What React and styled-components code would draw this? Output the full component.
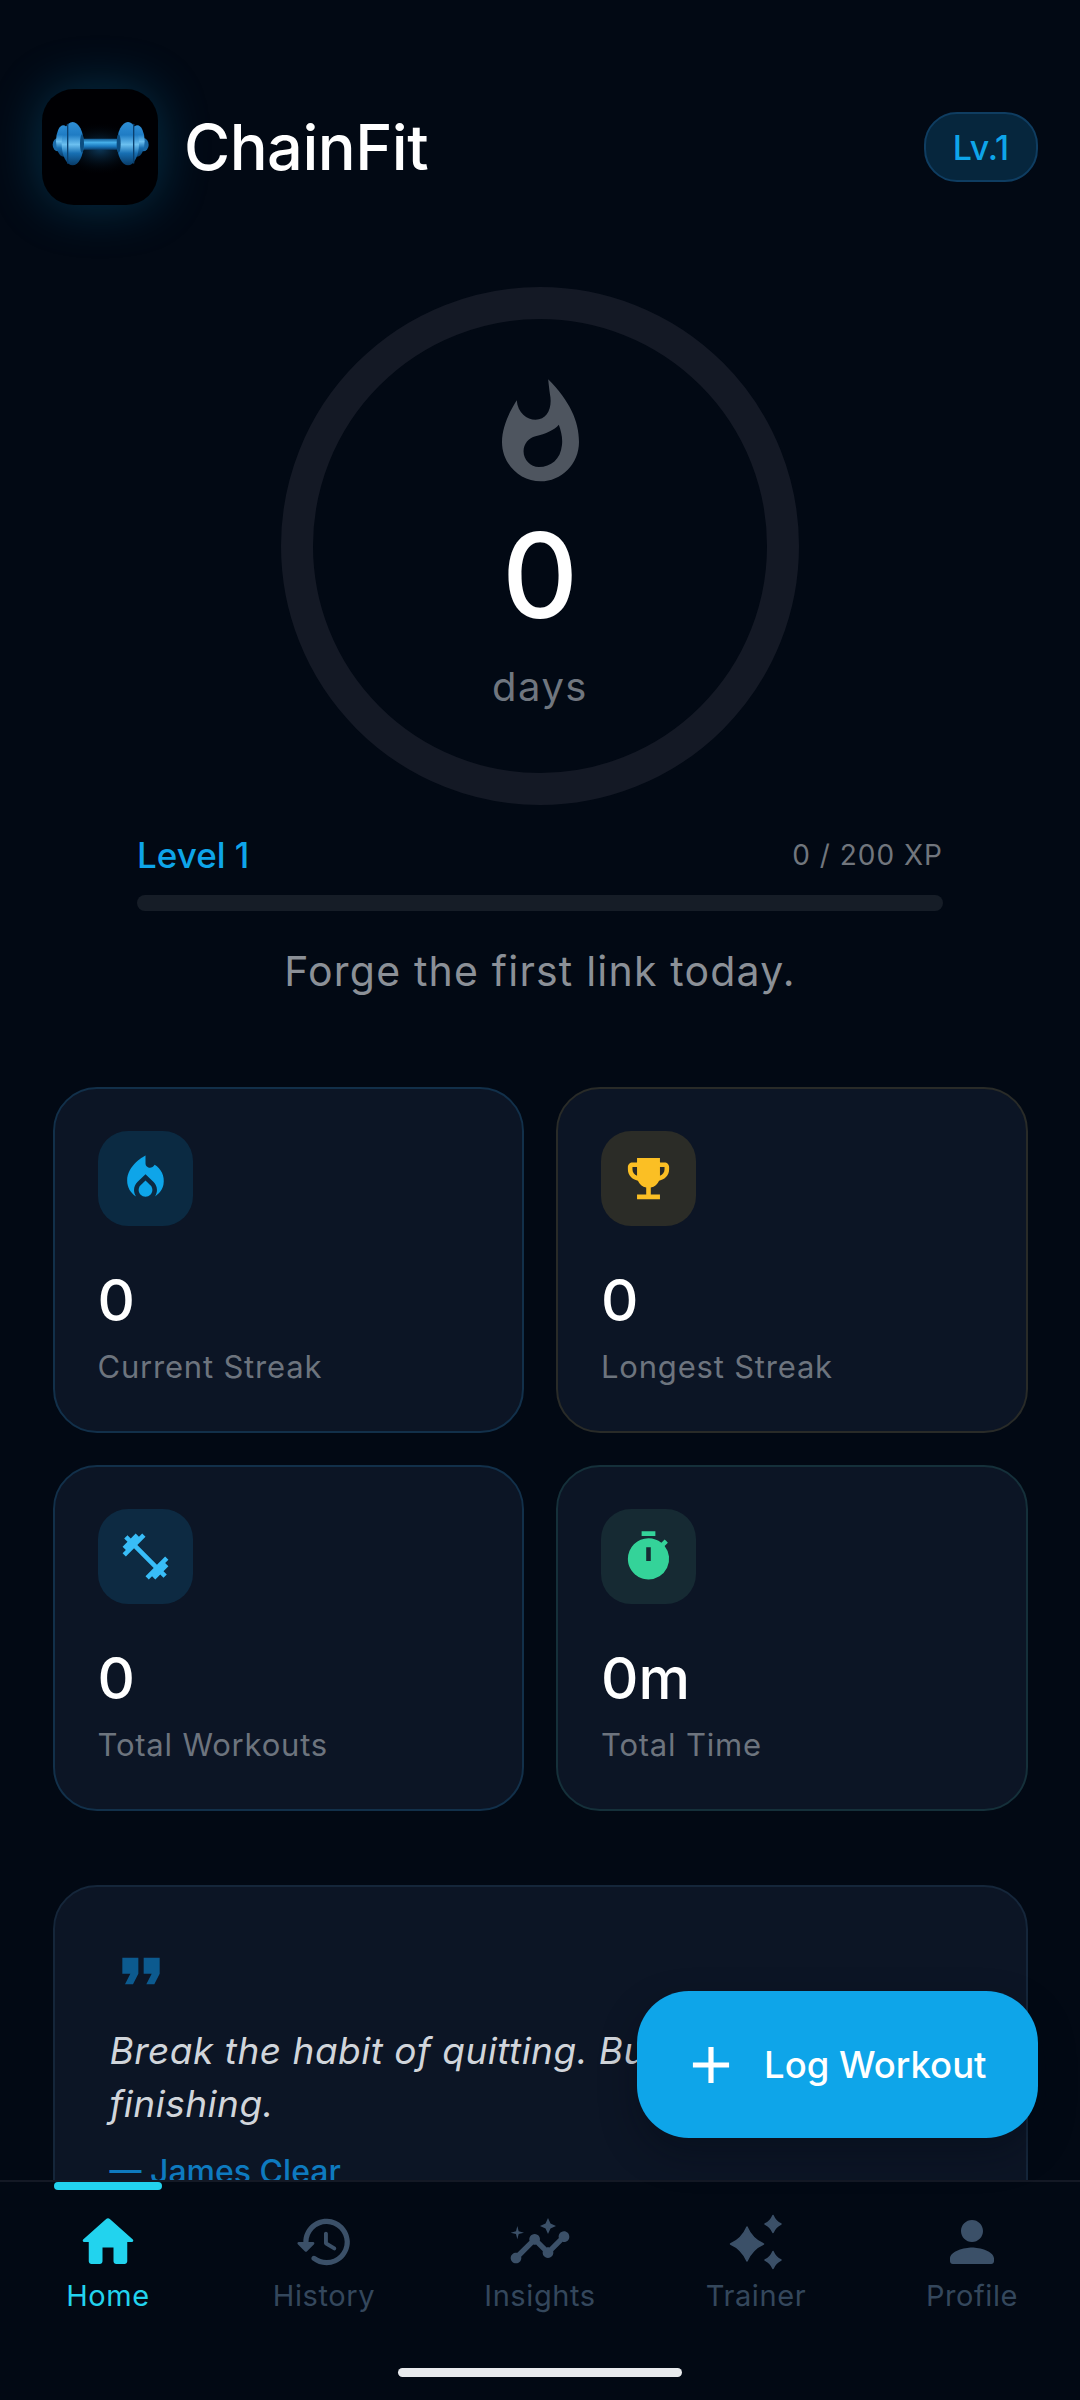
import React from "react";
import styled, { createGlobalStyle } from "styled-components";
import {
  MdLocalFireDepartment,
  MdEmojiEvents,
  MdFitnessCenter,
  MdTimer,
  MdFormatQuote,
  MdAdd,
  MdInsights,
} from "react-icons/md";

const GlobalStyle = createGlobalStyle`
  html, body {
    margin: 0;
    padding: 0;
    background: #020914;
  }
  * {
    box-sizing: border-box;
  }
`;

const star = (cx, cy, rx, ry) => {
  const a = rx * 0.3;
  const b = ry * 0.3;
  return `M${cx} ${cy - ry}Q${cx + a} ${cy - b} ${cx + rx} ${cy}Q${cx + a} ${cy + b} ${cx} ${cy + ry}Q${cx - a} ${cy + b} ${cx - rx} ${cy}Q${cx - a} ${cy - b} ${cx} ${cy - ry}Z`;
};

function DumbbellLogo() {
  return (
    <LogoSvg viewBox="66 56 344 348">
      <defs>
        <radialGradient id="logoGlow" cx="50%" cy="50%" r="50%">
          <stop offset="0%" stopColor="#0d3a5c" />
          <stop offset="100%" stopColor="#000003" stopOpacity="0" />
        </radialGradient>
        <linearGradient id="plate" x1="0" y1="0" x2="0" y2="1">
          <stop offset="0%" stopColor="#2f8fd6" />
          <stop offset="30%" stopColor="#1f7cc4" />
          <stop offset="52%" stopColor="#6cc0f0" />
          <stop offset="72%" stopColor="#176fb3" />
          <stop offset="100%" stopColor="#083a66" />
        </linearGradient>
        <linearGradient id="bar" x1="0" y1="0" x2="0" y2="1">
          <stop offset="0%" stopColor="#0f5a94" />
          <stop offset="35%" stopColor="#45aee8" />
          <stop offset="70%" stopColor="#1a78bd" />
          <stop offset="100%" stopColor="#0a3f6e" />
        </linearGradient>
      </defs>
      <ellipse cx="238" cy="235" rx="120" ry="80" fill="url(#logoGlow)" />
      <rect x="180" y="205" width="118" height="33" rx="5" fill="url(#bar)" />
      <ellipse cx="112" cy="223" rx="16" ry="20" fill="#1a6aa8" />
      <ellipse cx="128" cy="212" rx="22" ry="47" fill="url(#plate)" />
      <ellipse cx="156" cy="220" rx="33" ry="65" fill="url(#plate)" />
      <rect x="139" y="160" width="4" height="120" rx="2" fill="#0a3f6e" />
      <ellipse cx="184" cy="220" rx="6" ry="28" fill="#0c4d80" />
      <ellipse cx="368" cy="223" rx="16" ry="20" fill="#1a6aa8" />
      <ellipse cx="350" cy="212" rx="22" ry="47" fill="url(#plate)" />
      <ellipse cx="322" cy="220" rx="33" ry="65" fill="url(#plate)" />
      <rect x="337" y="160" width="4" height="120" rx="2" fill="#0a3f6e" />
      <ellipse cx="294" cy="220" rx="6" ry="28" fill="#0c4d80" />
    </LogoSvg>
  );
}

function EmptyFlame() {
  return (
    <FlameSvg viewBox="672 285 225 300">
      <path
        fillRule="evenodd"
        d="M807 287C870 350 897 410 897 470C897 535 845 585 785 585C725 585 672 535 672 470C672 425 695 380 715 348C718 385 745 405 770 405C805 405 820 370 812 330C810 315 808 300 807 287ZM838 420C825 435 800 447 770 453C750 458 735 475 735 497C735 522 755 543 780 543C815 543 843 520 847 480C850 460 845 440 838 420Z"
      />
    </FlameSvg>
  );
}

function HomeIcon() {
  return (
    <svg viewBox="0 0 24 24" width="66" height="66" fill="currentColor">
      <path d="M10 19v-5h4v5c0 .55.45 1 1 1h3c.55 0 1-.45 1-1v-7h1.7c.46 0 .68-.57.33-.87L12.67 3.6c-.38-.34-.96-.34-1.34 0l-8.36 7.53c-.34.3-.13.87.33.87H5v7c0 .55.45 1 1 1h3c.55 0 1-.45 1-1z" />
    </svg>
  );
}

function HistoryIcon() {
  return (
    <svg viewBox="0 0 24 24" width="62" height="62" fill="currentColor">
      <path d="M13.26 3C8.17 2.86 4 6.95 4 12H2.21c-.45 0-.67.54-.35.85l2.79 2.8c.2.2.51.2.71 0l2.79-2.8c.31-.31.09-.85-.36-.85H6c0-3.9 3.18-7.05 7.1-7 3.72.05 6.85 3.18 6.9 6.9.05 3.91-3.1 7.1-7 7.1-1.61 0-3.1-.55-4.28-1.48-.4-.31-.96-.28-1.32.08-.42.42-.39 1.13.08 1.49C9 20.29 10.91 21 13 21c5.05 0 9.14-4.17 9-9.26-.13-4.69-4.05-8.61-8.74-8.74zm-.51 5c-.41 0-.75.34-.75.75v3.68c0 .35.19.68.49.86l3.12 1.85c.36.21.82.09 1.03-.26.21-.36.09-.82-.26-1.03l-2.88-1.71v-3.4c0-.4-.34-.74-.75-.74z" />
    </svg>
  );
}

function TrainerIcon() {
  return (
    <svg viewBox="0 0 66 66" width="66" height="66" fill="currentColor" stroke="currentColor" strokeWidth="1.5" strokeLinejoin="round">
      <path d={star(24, 35, 16.5, 17)} />
      <path d={star(50, 15, 8, 8.5)} />
      <path d={star(50, 51, 8, 8.5)} />
    </svg>
  );
}

function ProfileIcon() {
  return (
    <svg viewBox="0 0 24 24" width="66" height="66" fill="currentColor">
      <path d="M12 12c2.21 0 4-1.79 4-4s-1.79-4-4-4-4 1.79-4 4 1.79 4 4 4zm0 2c-2.67 0-8 1.34-8 4v1c0 .55.45 1 1 1h14c.55 0 1-.45 1-1v-1c0-2.66-5.33-4-8-4z" />
    </svg>
  );
}

const stats = [
  { id: "current", value: "0", label: "Current Streak", Icon: MdLocalFireDepartment, color: "#0ea5e9", tint: "#0b2a42", edge: "#12304a" },
  { id: "longest", value: "0", label: "Longest Streak", Icon: MdEmojiEvents, color: "#fbbf24", tint: "#2b2c27", edge: "#292b28" },
  { id: "workouts", value: "0", label: "Total Workouts", Icon: MdFitnessCenter, color: "#38bdf8", tint: "#0d2a42", edge: "#12304a" },
  { id: "time", value: "0m", label: "Total Time", Icon: MdTimer, color: "#34d399", tint: "#162a33", edge: "#15303a" },
];

const tabs = [
  { id: "home", label: "Home", icon: <HomeIcon />, active: true },
  { id: "history", label: "History", icon: <HistoryIcon /> },
  { id: "insights", label: "Insights", icon: <MdInsights size={64} /> },
  { id: "trainer", label: "Trainer", icon: <TrainerIcon /> },
  { id: "profile", label: "Profile", icon: <ProfileIcon /> },
];

export default function App() {
  return (
    <Screen>
      <GlobalStyle />
      <Content>
        <Header>
          <Brand>
            <LogoTile>
              <DumbbellLogo />
            </LogoTile>
            <BrandName>ChainFit</BrandName>
          </Brand>
          <LevelPill>Lv.1</LevelPill>
        </Header>

        <Ring>
          <EmptyFlame />
          <RingValue>0</RingValue>
          <RingUnit>days</RingUnit>
        </Ring>

        <LevelBlock>
          <LevelRow>
            <LevelName>Level 1</LevelName>
            <LevelXp>0 / 200 XP</LevelXp>
          </LevelRow>
          <XpTrack />
        </LevelBlock>

        <Tagline>Forge the first link today.</Tagline>

        <StatGrid>
          {stats.map(({ id, value, label, Icon, color, tint, edge }) => (
            <StatCard key={id} $edge={edge}>
              <StatIcon $tint={tint} $color={color}>
                <Icon size={55} />
              </StatIcon>
              <StatValue>{value}</StatValue>
              <StatLabel>{label}</StatLabel>
            </StatCard>
          ))}
        </StatGrid>

        <QuoteCard>
          <QuoteMark>
            <MdFormatQuote size={64} />
          </QuoteMark>
          <QuoteText>Break the habit of quitting. Build the habit of finishing.</QuoteText>
          <QuoteAuthor>— James Clear</QuoteAuthor>
        </QuoteCard>
      </Content>

      <Fab>
        <MdAdd size={62} />
        <span>Log Workout</span>
      </Fab>

      <BottomNav>
        <TabRow>
          {tabs.map((tab) => (
            <Tab key={tab.id} $active={tab.active}>
              {tab.active && <TabMarker />}
              <TabIcon>{tab.icon}</TabIcon>
              <TabLabel $active={tab.active}>{tab.label}</TabLabel>
            </Tab>
          ))}
        </TabRow>
        <GestureBar />
      </BottomNav>
    </Screen>
  );
}

const Screen = styled.div`
  position: relative;
  width: 1080px;
  height: 2400px;
  display: flex;
  flex-direction: column;
  overflow: hidden;
  background: #020914;
  font-family: Inter, "Liberation Sans", sans-serif;
`;

const Content = styled.div`
  flex: 1;
  min-height: 0;
  overflow: hidden;
  display: flex;
  flex-direction: column;
  align-items: center;
`;

const Header = styled.div`
  width: 100%;
  display: flex;
  align-items: center;
  justify-content: space-between;
  padding: 89px 42px 0 42px;
`;

const Brand = styled.div`
  display: flex;
  align-items: center;
  gap: 26px;
`;

const LogoTile = styled.div`
  width: 116px;
  height: 116px;
  border-radius: 32px;
  background: #000003;
  box-shadow: 0 0 52px rgba(14, 165, 233, 0.26);
  overflow: hidden;
`;

const LogoSvg = styled.svg`
  display: block;
  width: 116px;
  height: 116px;
`;

const BrandName = styled.div`
  font-size: 63px;
  font-weight: 500;
  line-height: 80px;
  color: #ffffff;
  letter-spacing: -0.5px;
`;

const LevelPill = styled.div`
  width: 114px;
  height: 70px;
  border-radius: 33px;
  border: 2px solid #0f3d61;
  background: #06263d;
  color: #0ea5e9;
  font-size: 34px;
  font-weight: 500;
  display: flex;
  align-items: center;
  justify-content: center;
`;

const Ring = styled.div`
  margin-top: 82px;
  width: 518px;
  height: 518px;
  flex-shrink: 0;
  border-radius: 50%;
  border: 32px solid #141925;
  display: flex;
  flex-direction: column;
  align-items: center;
  padding-top: 59px;
`;

const FlameSvg = styled.svg`
  display: block;
  width: 77px;
  height: 104px;
  fill: #4e555f;
`;

const RingValue = styled.div`
  margin-top: 28px;
  font-size: 118px;
  font-weight: 500;
  line-height: 130px;
  color: #ffffff;
`;

const RingUnit = styled.div`
  margin-top: 23px;
  font-size: 40px;
  line-height: 48px;
  letter-spacing: 1.5px;
  color: #70767f;
`;

const LevelBlock = styled.div`
  width: 806px;
  margin-top: 28px;
`;

const LevelRow = styled.div`
  display: flex;
  align-items: center;
  justify-content: space-between;
  height: 44px;
`;

const LevelName = styled.div`
  font-size: 35px;
  font-weight: 500;
  color: #0ea5e9;
`;

const LevelXp = styled.div`
  font-size: 28px;
  letter-spacing: 1px;
  color: #71767d;
`;

const XpTrack = styled.div`
  margin-top: 18px;
  height: 16px;
  border-radius: 8px;
  background: #161d27;
`;

const Tagline = styled.div`
  margin-top: 36px;
  font-size: 41px;
  line-height: 48px;
  letter-spacing: 1.2px;
  color: #8b9097;
`;

const StatGrid = styled.div`
  margin-top: 92px;
  width: 975px;
  flex-shrink: 0;
  display: grid;
  grid-template-columns: 1fr 1fr;
  gap: 32px;
`;

const StatCard = styled.div`
  height: 346px;
  padding: 42px 43px;
  border-radius: 44px;
  border: 2px solid ${(p) => p.$edge};
  background: #0c1525;
  display: flex;
  flex-direction: column;
  align-items: flex-start;
`;

const StatIcon = styled.div`
  width: 95px;
  height: 95px;
  border-radius: 30px;
  background: ${(p) => p.$tint};
  color: ${(p) => p.$color};
  display: flex;
  align-items: center;
  justify-content: center;
`;

const StatValue = styled.div`
  margin-top: 38px;
  font-size: 58px;
  font-weight: 500;
  line-height: 72px;
  color: #ffffff;
`;

const StatLabel = styled.div`
  margin-top: 12px;
  font-size: 31px;
  line-height: 38px;
  letter-spacing: 0.8px;
  color: #6d747e;
`;

const QuoteCard = styled.div`
  margin-top: 74px;
  width: 975px;
  flex-shrink: 0;
  padding: 52px 58px 52px 55px;
  border-radius: 44px;
  border: 2px solid #15263a;
  background: #0c1525;
`;

const QuoteMark = styled.div`
  height: 66px;
  margin-left: -1px;
  color: #0c5a8f;
`;

const QuoteText = styled.div`
  margin-top: 19px;
  font-size: 37px;
  font-style: italic;
  line-height: 53px;
  letter-spacing: 0.5px;
  color: #d1d5db;
`;

const QuoteAuthor = styled.div`
  margin-top: 20px;
  font-size: 32px;
  font-weight: 500;
  line-height: 44px;
  color: #0e7abf;
`;

const Fab = styled.div`
  position: absolute;
  left: 637px;
  top: 1991px;
  width: 401px;
  height: 147px;
  border-radius: 52px;
  background: #0ea5e9;
  box-shadow: 0 16px 36px rgba(2, 9, 20, 0.35);
  color: #ffffff;
  display: flex;
  align-items: center;
  gap: 22px;
  padding-left: 43px;
  font-size: 36.5px;
  font-weight: 500;
`;

const BottomNav = styled.div`
  flex-shrink: 0;
  height: 220px;
  border-top: 2px solid #141925;
  background: #020914;
  display: flex;
  flex-direction: column;
  align-items: center;
`;

const TabRow = styled.div`
  width: 100%;
  display: grid;
  grid-template-columns: repeat(5, 1fr);
`;

const Tab = styled.div`
  position: relative;
  display: flex;
  flex-direction: column;
  align-items: center;
  padding-top: 27px;
  color: ${(p) => (p.$active ? "#22d3ee" : "#3b5068")};
`;

const TabMarker = styled.div`
  position: absolute;
  top: 0;
  left: 54px;
  width: 108px;
  height: 8px;
  border-radius: 4px;
  background: #22d3ee;
`;

const TabIcon = styled.div`
  height: 66px;
  display: flex;
  align-items: center;
  justify-content: center;
`;

const TabLabel = styled.div`
  margin-top: 2px;
  font-size: 29px;
  line-height: 38px;
  letter-spacing: 0.6px;
  color: ${(p) => (p.$active ? "#22d3ee" : "#34475c")};
`;

const GestureBar = styled.div`
  margin-top: 53px;
  width: 284px;
  height: 9px;
  border-radius: 5px;
  background: #e8eaed;
`;
